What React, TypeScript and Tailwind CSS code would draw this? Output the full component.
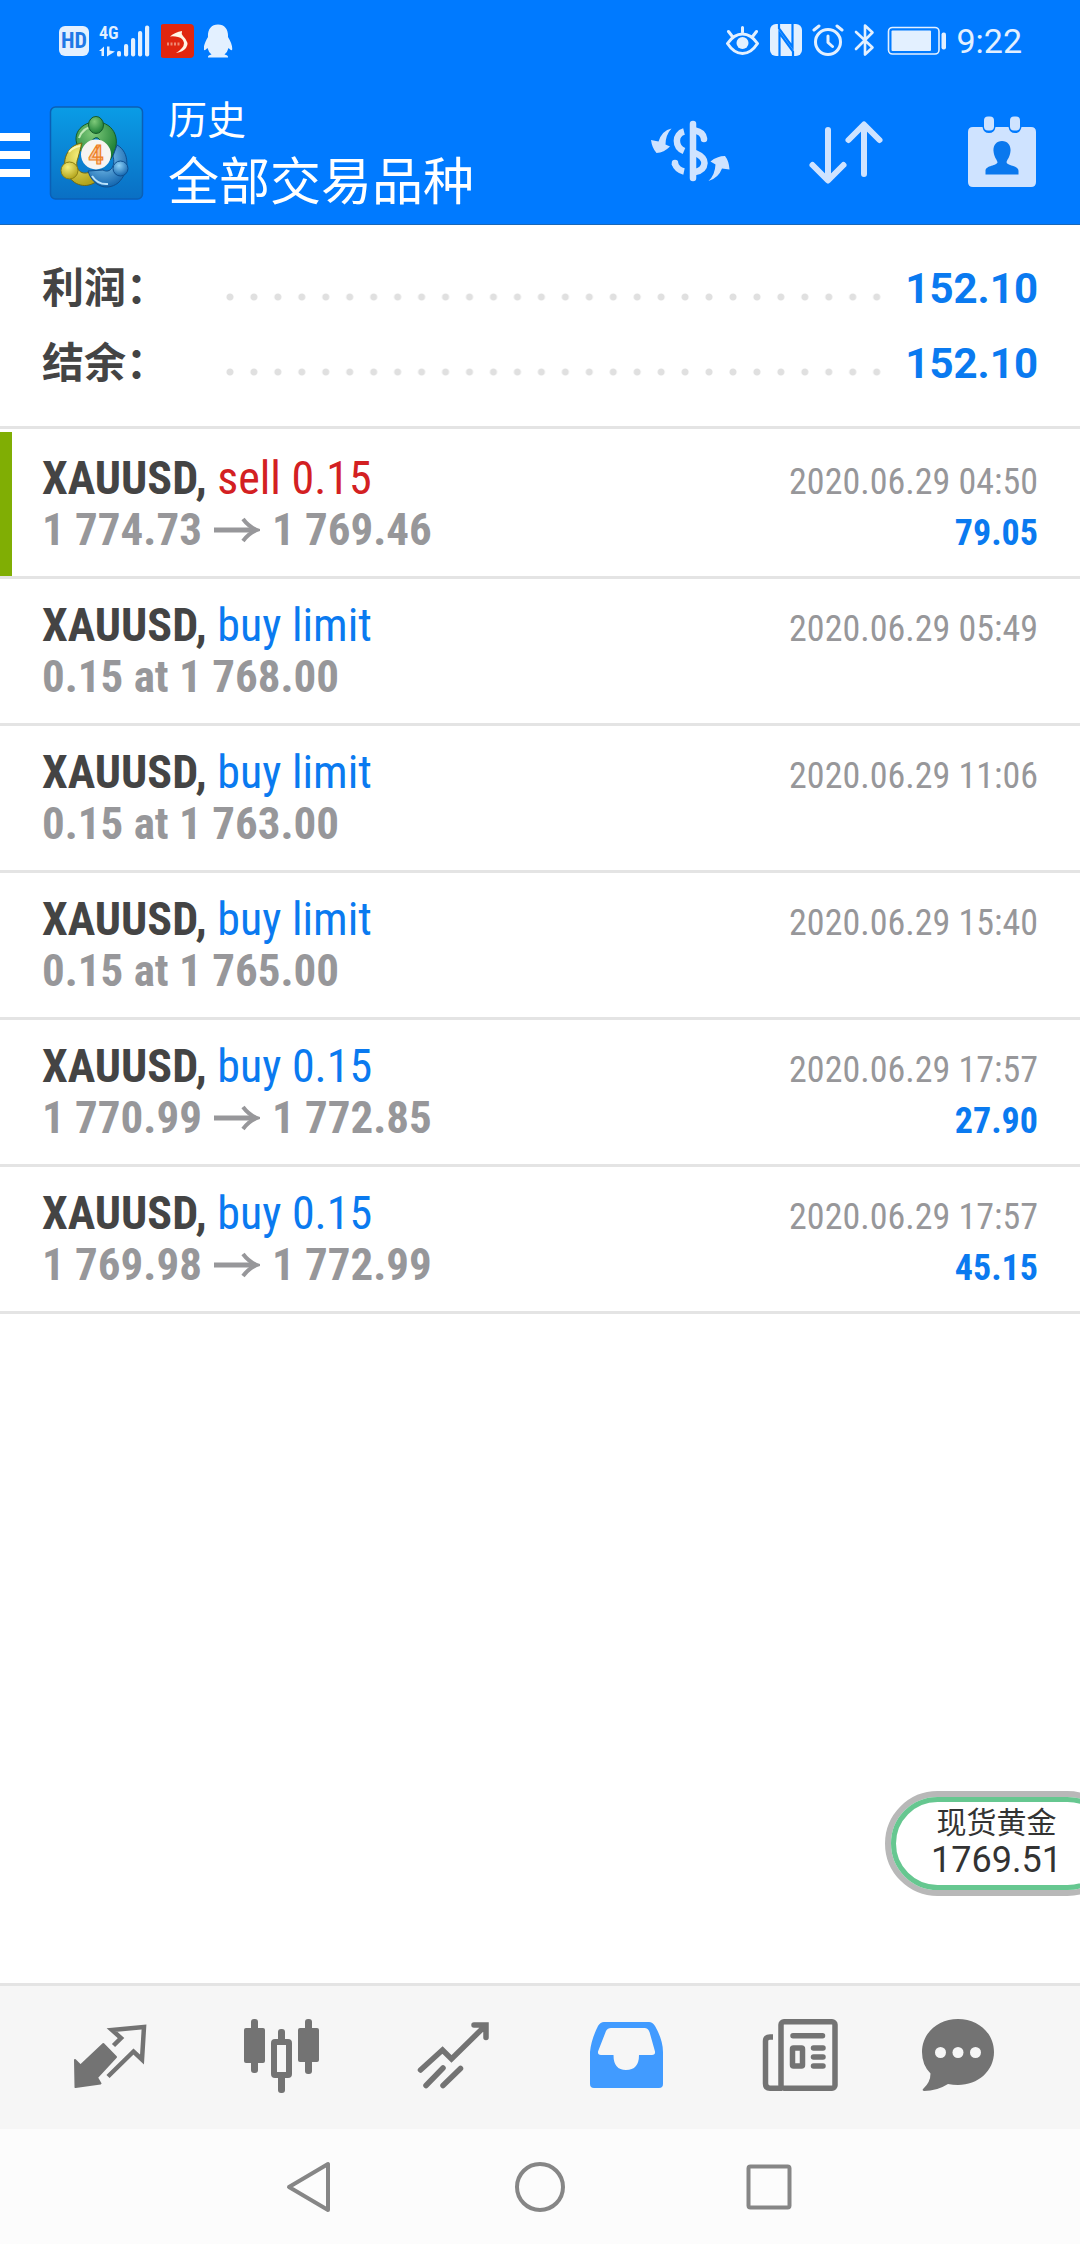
import type { ReactNode } from "react";

type Deal = {
  symbol: string;
  side: "buy" | "sell";
  action: string;
  open: string;
  close?: string;
  time: string;
  profit?: string;
  marked?: boolean;
};

const totals = [
  { label: "利润：", value: "152.10" },
  { label: "结余：", value: "152.10" },
];

const deals: Deal[] = [
  { symbol: "XAUUSD,", side: "sell", action: "sell 0.15", open: "1 774.73", close: "1 769.46", time: "2020.06.29 04:50", profit: "79.05", marked: true },
  { symbol: "XAUUSD,", side: "buy", action: "buy limit", open: "0.15 at 1 768.00", time: "2020.06.29 05:49" },
  { symbol: "XAUUSD,", side: "buy", action: "buy limit", open: "0.15 at 1 763.00", time: "2020.06.29 11:06" },
  { symbol: "XAUUSD,", side: "buy", action: "buy limit", open: "0.15 at 1 765.00", time: "2020.06.29 15:40" },
  { symbol: "XAUUSD,", side: "buy", action: "buy 0.15", open: "1 770.99", close: "1 772.85", time: "2020.06.29 17:57", profit: "27.90" },
  { symbol: "XAUUSD,", side: "buy", action: "buy 0.15", open: "1 769.98", close: "1 772.99", time: "2020.06.29 17:57", profit: "45.15" },
];

// Status bar
function StatusBar() {
  return (
    <div className="flex h-[81px] items-center justify-between pr-[58px] pl-[59px] text-[#e3f0ff]">
      <div className="flex items-center gap-[9px]">
        <span className="flex h-[30px] w-[30px] items-center justify-center rounded-md bg-[#e3f0ff] font-['Roboto_Condensed',sans-serif] text-[22px] font-bold text-[#1f78e6]">
          HD
        </span>
        <svg viewBox="98 22 54 36" className="h-9 w-[54px]" fill="currentColor">
          <text x="99" y="38" fontSize="18" fontWeight="600" fontFamily="Roboto Condensed, sans-serif">4G</text>
          <path d="M99 50 L104 45.5 V55 H101.5 V50Z M107 45.5 H109.5 V49.5 L115 50.5 L107 55.5Z" />
          <rect x="117" y="50" width="4" height="5.5" rx="1.5" />
          <rect x="124" y="43" width="4.2" height="12.5" rx="2" />
          <rect x="131" y="37" width="4.2" height="18.5" rx="2" />
          <rect x="138" y="30" width="4.2" height="25.5" rx="2" />
          <rect x="145" y="24.5" width="4.2" height="31" rx="2" />
        </svg>
        <svg viewBox="160 24 34 34" className="h-[34px] w-[34px]">
          <rect x="159" y="24" width="34" height="34" rx="4" fill="#e0260f" />
          <path d="M169 36.500 Q174 32 181 31 Q180 34 182 36 Q189 43 185 48 Q182 52 175 53 Q183 48 183 43 Q182 38 177 37 Q173 36 169 36.500Z" fill="#fff6e6" />
          <path d="M166 44 H179" stroke="#f5b39c" strokeWidth="3" strokeDasharray="2 1.500" opacity="0.7" />
        </svg>
        <svg viewBox="204 23 32 36" className="h-9 w-8" fill="currentColor">
          <path d="M218 24.500 C211 24.500 207.500 30 208 37 C205 42 203.500 46 203.800 49.500 Q204 51.500 207.500 48 Q208.500 52 211.500 54.500 Q207.500 55.500 208 57.500 H228 Q228.500 55.500 224.500 54.500 Q227.500 52 228.500 48 Q232 51.500 232.200 49.500 C232.500 46 231 42 228 37 C228.500 30 225 24.500 218 24.500Z" />
        </svg>
      </div>
      <div className="flex items-center gap-[9px]">
        <svg viewBox="726 23 34 36" className="h-9 w-[34px]" fill="none" stroke="currentColor" strokeWidth="3" strokeLinecap="round" strokeLinejoin="round">
          <path d="M727.500 43.500 Q734 34 742.500 34 Q751 34 757.500 43.500 Q751 53.500 742.500 53.500 Q734 53.500 727.500 43.500Z M742.500 27.500 V32 M728.500 31.500 L732 36 M756.500 31.500 L753 36" />
          <circle cx="742.500" cy="43" r="6" fill="currentColor" stroke="none" />
        </svg>
        <svg viewBox="769 23 34 36" className="h-9 w-[34px]">
          <rect x="770" y="24" width="32" height="32" rx="6" fill="currentColor" />
          <path d="M779.500 56 V33 L793 51.500 V56 M792.500 24 V47 L779 28.500 V24" stroke="#007aff" strokeWidth="2.200" fill="none" />
        </svg>
        <svg viewBox="812 23 32 36" className="h-9 w-8" fill="none" stroke="currentColor" strokeWidth="3" strokeLinecap="round" strokeLinejoin="round">
          <circle cx="828" cy="42" r="12.500" />
          <path d="M828 36 V42.500 L832.500 46.500 M814 30 L819 26 M837 26 L842 30" />
        </svg>
        <svg viewBox="853 23 22 36" className="h-9 w-[22px]" fill="none" stroke="currentColor" strokeWidth="2.600" strokeLinecap="round" strokeLinejoin="round">
          <path d="M856 32 L872.500 47.500 L865 54.500 V25.500 L872.500 32.500 L856 49" />
        </svg>
        <svg viewBox="885 23 63 36" className="h-9 w-[63px]">
          <rect x="889.500" y="27.500" width="50.500" height="26.500" rx="4" fill="none" stroke="currentColor" strokeWidth="1.600" />
          <rect x="892.500" y="30.500" width="39.500" height="20.500" rx="1" fill="currentColor" />
          <rect x="942.500" y="32.500" width="4.500" height="17" rx="2" fill="currentColor" />
        </svg>
        <span className="text-[34px] leading-[40px]">9:22</span>
      </div>
    </div>
  );
}

function AppLogo() {
  return (
    <svg viewBox="48 105 96 96" className="h-24 w-24">
      <defs>
        <linearGradient id="tile" x1="0" y1="0" x2="0" y2="1">
          <stop offset="0" stopColor="#0a9ce6" />
          <stop offset="1" stopColor="#0a6fc4" />
        </linearGradient>
        <radialGradient id="green" cx="0.4" cy="0.3" r="0.7">
          <stop offset="0" stopColor="#7fca7a" />
          <stop offset="1" stopColor="#1c7f35" />
        </radialGradient>
        <radialGradient id="yellow" cx="0.4" cy="0.3" r="0.7">
          <stop offset="0" stopColor="#f5ee7a" />
          <stop offset="1" stopColor="#b3a41c" />
        </radialGradient>
        <radialGradient id="blue" cx="0.4" cy="0.3" r="0.7">
          <stop offset="0" stopColor="#8fd2f7" />
          <stop offset="1" stopColor="#1668b0" />
        </radialGradient>
      </defs>
      <rect x="50.500" y="107" width="92" height="92" rx="5" fill="url(#tile)" stroke="#0b5fb5" strokeWidth="1.500" />
      <path d="M84 154 C68 140 78 122 96 122 C115 122 123 142 110 160 L100 140 Q96 134 90 143Z" fill="url(#green)" stroke="#155a2a" />
      <path d="M82 143 C67 145 60 162 68 175 C75 188 90 188 98 180 L90 172 C80 176 74 168 78 158Z" fill="url(#yellow)" stroke="#6f6710" />
      <path d="M117 145 C130 152 130 172 118 183 C106 192 92 185 88 171 L103 170 C110 174 116 166 113 156Z" fill="url(#blue)" stroke="#0f4f8f" />
      <path d="M79 138 Q83 127 95 126" stroke="#bfe8b5" strokeWidth="2" fill="none" />
      <path d="M69 152 Q73 147 80 146" stroke="#fbf7b0" strokeWidth="2" fill="none" />
      <path d="M92 176 Q98 185 108 184" stroke="#b9e2fb" strokeWidth="2" fill="none" />
      <ellipse cx="96" cy="125" rx="7.500" ry="8.500" fill="url(#green)" stroke="#155a2a" />
      <circle cx="69.500" cy="170.500" r="8.500" fill="url(#yellow)" stroke="#8a7f14" />
      <circle cx="120.500" cy="168.500" r="7.500" fill="url(#blue)" stroke="#0f4f8f" />
      <circle cx="96" cy="154.500" r="15" fill="#f6f4f2" />
      <text x="96" y="163.500" textAnchor="middle" fontSize="26" fontWeight="700" fontFamily="Roboto, sans-serif" fill="#f9c9a0" stroke="#ee7f25" strokeWidth="1.200">4</text>
    </svg>
  );
}

function ToolButton({ label, children }: { label: string; children: ReactNode }) {
  return (
    <button type="button" aria-label={label} className="flex h-36 w-[156px] items-center justify-center text-[#cfe3ff]">
      {children}
    </button>
  );
}

function Header() {
  return (
    <header className="border-b border-[#1a68b8] bg-[#007aff] text-white">
      <StatusBar />
      <div className="flex h-[143px] items-center">
        <button type="button" aria-label="Menu" className="mt-1 flex w-12 shrink-0 flex-col gap-[10px]">
          <span className="h-2 w-[30px] bg-white" />
          <span className="h-2 w-[30px] bg-white" />
          <span className="h-2 w-[30px] bg-white" />
        </button>
        <AppLogo />
        <div className="ml-6 flex-1">
          <p className="text-[39px] leading-[60px]">历史</p>
          <h1 className="text-[51px] leading-[64px]">全部交易品种</h1>
        </div>
        <ToolButton label="Currency">
          <svg viewBox="642 105 96 96" className="h-24 w-24" fill="none" stroke="currentColor" strokeWidth="6.500">
            <path d="M693 124 V178" strokeLinecap="round" />
            <path d="M684 131.500 C674.500 134 674.500 147 684 151" />
            <path d="M674.500 163 Q677 170 684 171.500" />
            <path d="M675 163.200 V163" strokeLinecap="round" />
            <path d="M695 130.500 Q703 132 704 138.500 V139" strokeLinecap="round" />
            <path d="M695 153 Q704.500 157 704.500 163 Q704 170.500 695 172" />
            <path d="M671.500 128.500 Q662 130.500 658.500 141.500 L651 140 Q652 148 656.500 153 Q664 152.500 670 146.500 L665.500 144.500 Q665.500 135 671.500 128.500Z M708.500 181 Q718.500 178 722 168.500 L729.500 169.500 Q729 161 725 156 Q717 156 710.500 161.500 L715.500 164.500 Q715 175 708.500 181Z" fill="currentColor" stroke="none" />
          </svg>
        </ToolButton>
        <ToolButton label="Sort">
          <svg viewBox="798 105 96 96" className="h-24 w-24" fill="none" stroke="currentColor" strokeWidth="6" strokeLinecap="round" strokeLinejoin="round">
            <path d="M828 130 V180 M812.500 165 L828 180.500 L843.500 165 M864 174 V125 M848.500 140 L864 124.500 L879.500 140" />
          </svg>
        </ToolButton>
        <ToolButton label="Period">
          <svg viewBox="954 105 96 96" className="h-24 w-24" fill="currentColor">
            <path d="M973 127 H982.500 Q983.500 133 989 133 Q994.500 133 995.500 127 H1008.500 Q1009.500 133 1015 133 Q1020.500 133 1021.500 127 H1031 Q1036 127 1036 132 V182 Q1036 187 1031 187 H973 Q968 187 968 182 V132 Q968 127 973 127Z" />
            <rect x="984" y="116.500" width="10" height="14" rx="4" />
            <rect x="1010" y="116.500" width="10" height="14" rx="4" />
            <path d="M1002 141 C1008 141 1011 146 1010.500 151 C1010 157 1007.500 159 1006.500 162 C1006.500 166 1018.500 165 1018.500 171 V174.500 H985.500 V171 C985.500 165 997.500 166 997.500 162 C996.500 159 994 157 993.500 151 C993 146 996 141 1002 141Z" fill="#0a78ee" />
          </svg>
        </ToolButton>
      </div>
    </header>
  );
}

function Totals() {
  return (
    <dl className="border-b-3 border-[#e4e4e4] px-[42px] pt-[26px] pb-[25px] text-[42px] leading-[75px] font-bold">
      {totals.map((row) => (
        <div key={row.label} className="flex items-center">
          <dt className="w-44 text-[#444]">{row.label}</dt>
          <div className="mt-4 h-2 flex-1 bg-[radial-gradient(circle,#e0e0e0_3px,transparent_4px)] bg-[length:24px_8px] bg-repeat-round" />
          <dd className="ml-4 text-[#0a7af0]">{row.value}</dd>
        </div>
      ))}
    </dl>
  );
}

function DealRow({ deal }: { deal: Deal }) {
  return (
    <li
      className={`border-b-3 border-b-[#e4e4e4] px-[42px] pt-[21px] pb-[21px] font-['Roboto_Condensed',Roboto,sans-serif] leading-[51px] ${
        deal.marked ? "bg-linear-to-r from-[#80ae04] from-[12px] to-transparent to-[12px]" : ""
      }`}
    >
      <div className="flex h-[51px] items-baseline justify-between">
        <p className="text-[46px]">
          <span className="font-bold text-[#444]">{deal.symbol}</span>{" "}
          <span className={deal.side === "sell" ? "text-[#d32022]" : "text-[#0a7af0]"}>{deal.action}</span>
        </p>
        <time className="text-[36px] text-[#97979a]">{deal.time}</time>
      </div>
      <div className="flex h-[51px] items-baseline justify-between font-bold">
        <p className="flex items-center gap-3 text-[45px] text-[#97979a]">
          {deal.open}
          {deal.close && (
            <>
              <svg viewBox="0 0 46 26" className="h-[26px] w-[46px]" fill="none" stroke="currentColor" strokeWidth="5">
                <path d="M0 13 H42" />
                <path d="M29 2 Q35 10 43 13 Q35 16 29 24" strokeWidth="4" />
              </svg>
              {deal.close}
            </>
          )}
        </p>
        {deal.profit && <span className="text-[36px] text-[#0a7af0]">{deal.profit}</span>}
      </div>
    </li>
  );
}

const tabs = [
  {
    label: "Quotes",
    icon: (
      <svg viewBox="62 2010 96 96" className="h-24 w-24">
        <path d="M103.300 2044 L116 2057 L97 2077.500 L100.500 2083.500 L75.500 2087 L75 2060 L80.500 2065.500Z" fill="currentColor" stroke="currentColor" strokeWidth="2" strokeLinejoin="round" />
        <path d="M113.500 2045.500 L121 2038 L112 2030 L144 2027 L142 2059.500 L133.500 2051.500 L108 2076.500" fill="none" stroke="currentColor" strokeWidth="4.500" />
      </svg>
    ),
  },
  {
    label: "Charts",
    icon: (
      <svg viewBox="234 2010 96 96" className="h-24 w-24" fill="currentColor">
        <rect x="244" y="2028" width="21" height="35" rx="2" />
        <rect x="251" y="2019" width="7" height="54" rx="3" />
        <rect x="298" y="2028" width="21" height="34" rx="2" />
        <rect x="305" y="2019" width="7" height="55" rx="3" />
        <rect x="278" y="2029" width="7" height="14" rx="3" />
        <rect x="278" y="2075" width="7" height="18" rx="3" />
        <rect x="274" y="2042" width="15" height="33" rx="1" fill="none" stroke="currentColor" strokeWidth="6" />
      </svg>
    ),
  },
  {
    label: "Trade",
    icon: (
      <svg viewBox="406 2010 96 96" className="h-24 w-24" fill="none" stroke="currentColor" strokeWidth="5.500" strokeLinecap="round">
        <path d="M420.500 2070 L442.500 2050 L451.500 2059 L484 2027 M474 2025 H486 V2037.500 M426 2085.500 L443 2068 M443 2085.500 L460.500 2068.500" />
      </svg>
    ),
  },
  {
    label: "History",
    active: true,
    icon: (
      <svg viewBox="578 2010 96 96" className="h-24 w-24" fill="currentColor" fillRule="evenodd">
        <path d="M604 2022 H649 Q652.500 2022 655 2026 Q663 2040 663 2052 V2084 Q663 2088 659 2088 H594 Q590 2088 590 2084 V2052 Q591 2040 598 2026 Q600.500 2022 604 2022Z M611 2028 Q607.500 2028 606 2031 L598 2051.500 Q597.500 2055 601 2055 H613.500 Q613.500 2070 626 2070 Q639 2070 639 2055 H652 Q655.500 2055 655 2051.500 L649.500 2032 Q648 2028 644.500 2028Z" />
      </svg>
    ),
  },
  {
    label: "News",
    icon: (
      <svg viewBox="750 2010 96 96" className="h-24 w-24" fill="none" stroke="currentColor" strokeWidth="5.500">
        <rect x="781" y="2021.800" width="54" height="66.500" rx="3" />
        <path d="M773 2037 H770 Q765.500 2037 765.500 2041 V2083.500 Q765.500 2088.300 770 2088.300 H782" />
        <path d="M793 2035.800 H822.500 M813.500 2048 H823 M813.500 2057 H823 M813.500 2066 H823" strokeLinecap="round" />
        <rect x="792.500" y="2048" width="10" height="18" rx="1" />
      </svg>
    ),
  },
  {
    label: "Messages",
    icon: (
      <svg viewBox="922 2010 96 96" className="h-24 w-24" fill="currentColor">
        <path d="M958 2019 C978 2019 994 2033 994 2052 C994 2071 978 2085 958 2085 Q953 2085 948 2084 Q937 2091 924 2091 Q921.500 2090.500 923.500 2088.500 Q930.500 2082 930.500 2073.500 Q922 2065 922 2052 C922 2033 938 2019 958 2019Z" />
        <g fill="#f6f6f6">
          <circle cx="940.500" cy="2052.500" r="5.500" />
          <circle cx="958" cy="2052.500" r="5.500" />
          <circle cx="975.500" cy="2052.500" r="5.500" />
        </g>
      </svg>
    ),
  },
];

function TabBar() {
  return (
    <nav className="flex h-[146px] border-t-3 border-[#e4e4e4] bg-[#f6f6f6] px-6">
      {tabs.map((tab) => (
        <button
          key={tab.label}
          type="button"
          aria-label={tab.label}
          className={`flex flex-1 items-center justify-center ${tab.active ? "text-[#419bff]" : "text-[#737373]"}`}
        >
          {tab.icon}
        </button>
      ))}
    </nav>
  );
}

// Android navigation keys
function SystemKeys() {
  return (
    <div className="flex h-[115px] justify-center bg-[#fcfcfc] text-[#868686]">
      <button type="button" aria-label="Back" className="flex w-[230px] items-center justify-center">
        <svg viewBox="282 2159 56 56" className="h-14 w-14" fill="none" stroke="currentColor" strokeWidth="4" strokeLinejoin="round">
          <path d="M289 2187 L328 2164 V2210Z" />
        </svg>
      </button>
      <button type="button" aria-label="Home" className="flex w-[230px] items-center justify-center">
        <svg viewBox="512 2159 56 56" className="h-14 w-14" fill="none" stroke="currentColor" strokeWidth="4">
          <circle cx="540" cy="2187" r="23" />
        </svg>
      </button>
      <button type="button" aria-label="Recent apps" className="flex w-[230px] items-center justify-center">
        <svg viewBox="742 2159 56 56" className="h-14 w-14" fill="none" stroke="currentColor" strokeWidth="4">
          <rect x="748.500" y="2166.500" width="41" height="41" rx="2" />
        </svg>
      </button>
    </div>
  );
}

export default function App() {
  return (
    <div className="flex min-h-screen flex-col bg-white font-[Roboto,'Noto_Sans_CJK_SC',sans-serif]">
      <Header />
      <main className="relative flex-1 overflow-hidden">
        <Totals />
        <ul className="pt-[3px]">
          {deals.map((deal) => (
            <DealRow key={deal.time + deal.open} deal={deal} />
          ))}
        </ul>
        {/* Floating quote, partly off the right edge */}
        <button type="button" className="absolute -right-10 bottom-[87px] w-[235px] rounded-full border-6 border-[#b8b8b8] bg-white">
          <span className="flex h-[93px] flex-col items-center justify-center rounded-full border-5 border-[#66c790] pr-3 pb-1 text-[#333]">
            <span className="text-[30px] leading-[36px]">现货黄金</span>
            <span className="text-[36px] leading-[38px]">1769.51</span>
          </span>
        </button>
      </main>
      <TabBar />
      <SystemKeys />
    </div>
  );
}
